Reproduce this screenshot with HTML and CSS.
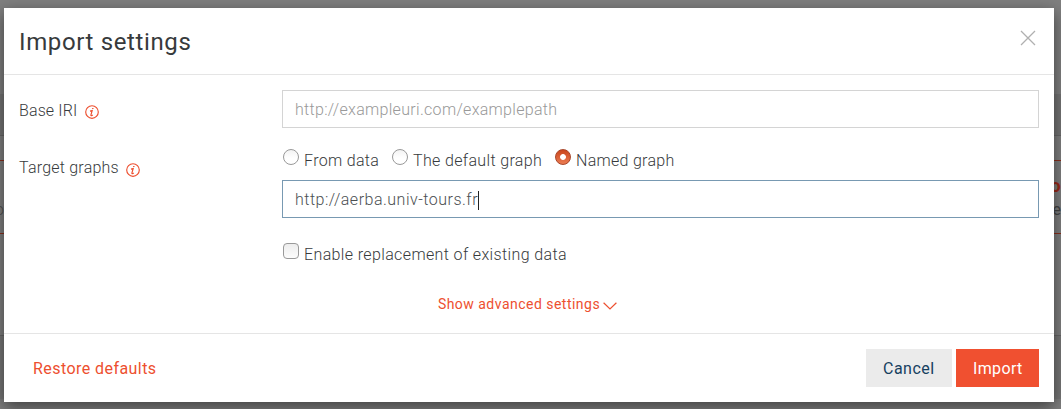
FILE: index.html
```html
<!DOCTYPE html>
<html lang="en">
<head>
<meta charset="utf-8">
<title>Import settings</title>
<link rel="stylesheet" href="styles.css">
</head>
<body>
<div class="page">
  <div class="page-toolbar"></div>
  <div class="page-row"><span class="row-start">o</span><span class="row-end"><b>o</b><span>e</span></span></div>
  <div class="page-rest"></div>
  <div class="page-footer"></div>
</div>
<main class="modal">
  <header class="modal-header">
    <h1 class="title"><span class="t-title">Import settings</span></h1>
    <svg class="close" width="16" height="16" viewBox="0 0 16 16"><path d="M1 1l14 14M15 1L1 15"/></svg>
  </header>
  <section class="modal-body">
    <div class="field base">
      <div class="label"><span class="t-base">Base IRI</span>
        <svg class="info" width="14" height="14" viewBox="0 0 14 14"><circle cx="7" cy="7" r="6.300"/><path d="M5 6.100l2.200-.6-1.300 4.700q0 .9 1.900-.3"/><path class="dot" d="M7.800 2.900v1.200"/></svg>
      </div>
      <div class="input"><span class="t-placeholder">http://exampleuri.com/examplepath</span></div>
    </div>
    <div class="field target">
      <div class="label"><span class="t-target">Target graphs</span>
        <svg class="info" width="14" height="14" viewBox="0 0 14 14"><circle cx="7" cy="7" r="6.300"/><path d="M5 6.100l2.200-.6-1.300 4.700q0 .9 1.900-.3"/><path class="dot" d="M7.800 2.900v1.200"/></svg>
      </div>
      <div class="controls">
        <div class="radios">
          <div class="option from"><i class="radio"></i><span class="t-from">From data</span></div>
          <div class="option default"><i class="radio"></i><span class="t-default">The default graph</span></div>
          <div class="option named"><i class="radio checked"></i><span class="t-named">Named graph</span></div>
        </div>
        <div class="input focused"><span class="t-value">http://aerba.univ-tours.fr</span><i class="caret"></i></div>
        <div class="option replace"><i class="checkbox"></i><span class="t-replace">Enable replacement of existing data</span></div>
      </div>
    </div>
    <div class="advanced"><span class="t-advanced">Show advanced settings</span><svg class="chevron" width="14" height="8" viewBox="0 0 14 8"><path d="M.6.8L7 7 13.400.8"/></svg></div>
  </section>
  <footer class="modal-footer">
    <div class="restore"><span class="t-restore">Restore defaults</span></div>
    <div class="button cancel"><span class="t-cancel">Cancel</span></div>
    <div class="button import"><span class="t-import">Import</span></div>
  </footer>
</main>
</body>
</html>
```
FILE: styles.css
```css
* { box-sizing: border-box; }
body {
  margin: 0;
  width: 1061px;
  height: 409px;
  overflow: hidden;
  position: relative;
  padding: 8px 7px 7px 4px;
  background: #7f7f7f;
  color: #373a3c;
  font: 300 16px/24px Roboto, "Open Sans", sans-serif;
}
.page { position: absolute; inset: 0; display: flex; flex-direction: column; }
.page-toolbar { height: 42px; margin-top: 94px; background: #747474; border-bottom: 1px solid #666; }
.page-row {
  display: flex;
  justify-content: space-between;
  margin-top: 24px;
  height: 74px;
  border: solid #8c301d;
  border-width: 1px 0;
}
.row-start { margin: 37px 0 0 -5px; color: #505050; }
.row-end { display: flex; flex-direction: column; margin: 13px 0 0; color: #444; font-weight: 400; }
.row-end b { color: #9b2a18; font-size: 18px; margin-left: -2px; }
.page-rest { height: 102px; border-bottom: 1px solid #666; }
.page-footer { height: 63px; background: #777; }
.modal {
  position: relative;
  height: 394px;
  background: #fff;
  box-shadow: 0 5px 15px rgba(0, 0, 0, .5);
}
.modal span { display: inline-block; white-space: nowrap; }
.modal-header {
  height: 67px;
  display: flex;
  justify-content: space-between;
  padding: 16px 18px 0 15px;
  border-bottom: 1px solid #e5e5e5;
}
.title { margin: 0; font-size: 24px; font-weight: 400; line-height: 36px; }
.close { margin-top: 6px; fill: none; stroke: #b0b0b0; stroke-width: 1.3; }
.modal-body { height: 258px; padding: 15px 15px 0; }
.field { display: grid; grid-template-columns: 263px 1fr; }
.label { display: flex; gap: 7.5px; padding-top: 8px; }
.base .label { padding-top: 9px; }
.info { margin-top: 6px; fill: none; stroke: #ed4f2f; stroke-width: 1.15; }
.target .info { margin-top: 7px; }
.dot { stroke-width: 1.4; }
.input {
  height: 38px;
  display: flex;
  align-items: center;
  padding: 2px 12px 0;
  border: 1px solid #d4d4d4;
  color: #999;
}
.focused { border-color: #7899b2; color: #4b4f52; }
.caret { width: 1px; height: 19px; background: #222; }
.target { margin-top: 20px; }
.radios { display: flex; height: 32px; }
.option { display: flex; gap: 5px; }
.option span { margin-top: 1px; }
.from { width: 109px; }
.default { width: 163px; }
.radio, .checkbox {
  width: 16px;
  height: 16px;
  margin: 1px 0 0 1px;
  border: 1px solid #999;
  border-radius: 50%;
  background: linear-gradient(#f3f3f3, #fff 60%);
}
.checkbox { border-radius: 4px; background: linear-gradient(#ededed, #fcfcfc); }
.checked {
  border-color: #a8462a;
  background: radial-gradient(circle, #fff 2.5px, transparent 3.3px), linear-gradient(#ca461c, #eb7c52);
}
.replace { margin-top: 24px; height: 24px; }
.advanced {
  display: flex;
  align-items: center;
  justify-content: center;
  gap: 3px;
  margin-top: 26px;
  height: 24px;
  padding-right: 3px;
  color: #ed4f2f;
  font-size: 14px;
  font-weight: 400;
}
.chevron { margin-top: 4px; fill: none; stroke: #ed4f2f; stroke-width: 1.2; }
.modal-footer {
  display: flex;
  gap: 4px;
  height: 69px;
  padding: 15px 15px 0 29px;
  border-top: 1px solid #e5e5e5;
  font-weight: 400;
}
.restore { flex: 1; line-height: 40px; color: #ed4f2f; }
.button { height: 38px; line-height: 40px; padding-left: 17px; }
.cancel { width: 86px; background: #ebebeb; color: #16405f; }
.import { width: 83px; background: #f05030; color: #fff; }
.t-title { letter-spacing: .63px; }
.t-base { letter-spacing: .12px; }
.t-target { letter-spacing: .22px; }
.t-placeholder { letter-spacing: .31px; }
.t-from { letter-spacing: .33px; }
.t-default { letter-spacing: .35px; }
.t-named { letter-spacing: .28px; }
.t-value { letter-spacing: .5px; }
.t-replace { letter-spacing: .37px; }
.t-advanced { letter-spacing: .48px; }
.t-restore { letter-spacing: .44px; }
.t-cancel { letter-spacing: .5px; }
.t-import { letter-spacing: .35px; }
```
